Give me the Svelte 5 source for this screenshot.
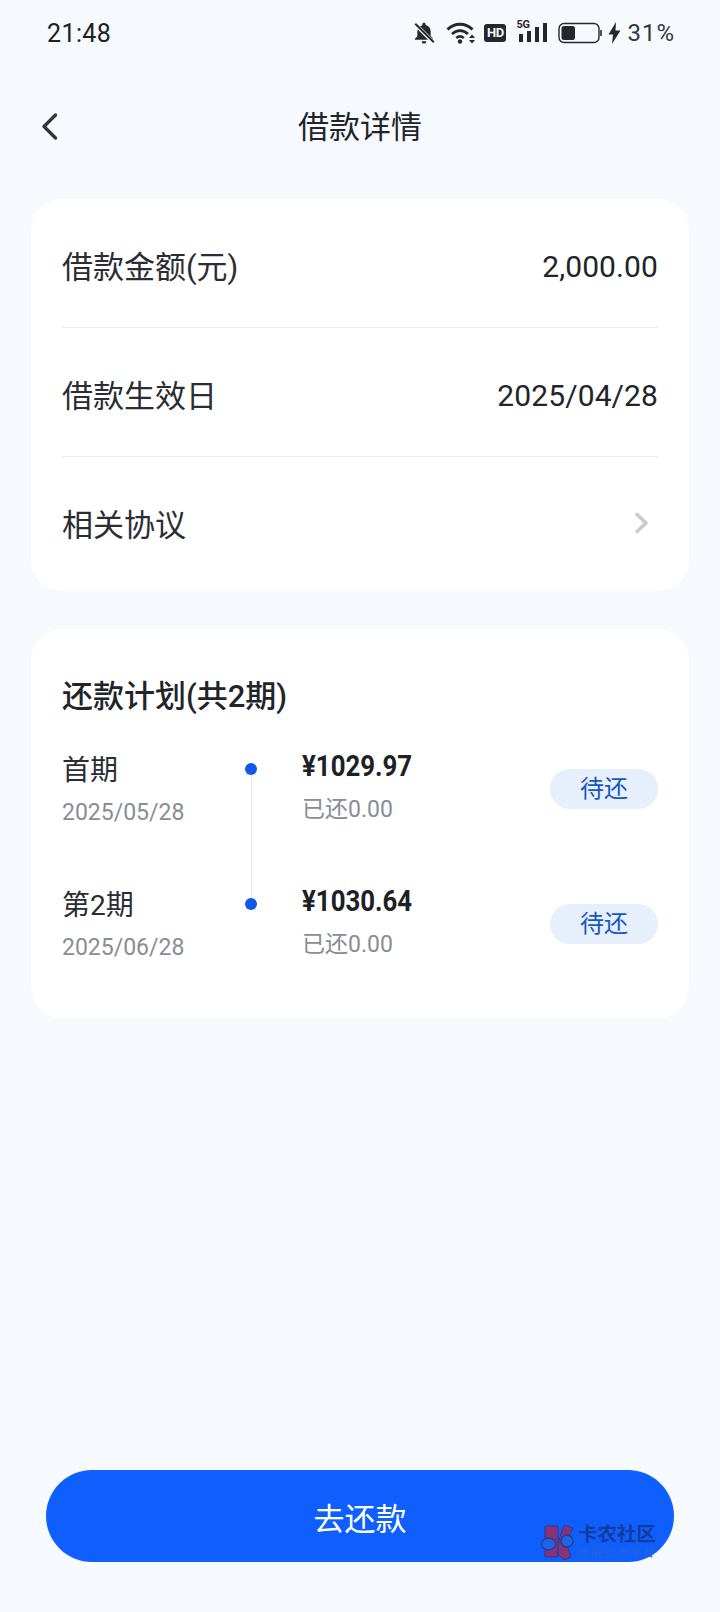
<script>
	const rows = [
		{ label: '借款金额(元)', value: '2,000.00' },
		{ label: '借款生效日', value: '2025/04/28' },
		{ label: '相关协议', arrow: true }
	];
	const plans = [
		{ title: '首期', date: '2025/05/28', amount: '¥1029.97', paid: '已还0.00', status: '待还' },
		{ title: '第2期', date: '2025/06/28', amount: '¥1030.64', paid: '已还0.00', status: '待还' }
	];
</script>

<div class="page">
	<div class="status-bar">
		<span class="time">21:48</span>
		<div class="status-icons">
			<svg class="ic-bell" width="24" height="24" viewBox="0 0 22 22">
				<path d="M11 1.500c.9 0 1.500.6 1.500 1.500v.6c3 .7 4.600 3 4.600 6v4l2.200 2.600v1H2.700v-1L4.900 14v-4c0-3 1.600-5.300 4.600-6V3c0-.9.6-1.500 1.500-1.500z" fill="#24272c" />
				<path d="M8.800 18.600h4.400a2.200 2.200 0 0 1-4.400 0z" fill="#24272c" />
				<path d="M2.500 2.500l17.500 17.500" stroke="#f6faff" stroke-width="3.600" />
				<path d="M3 2.500l17 17" stroke="#24272c" stroke-width="1.800" />
			</svg>
			<svg class="ic-wifi" width="30" height="24" viewBox="0 0 30 24">
				<path d="M1.500 8.500C8.500 1.500 19.500 1.500 26.500 8.500" fill="none" stroke="#24272c" stroke-width="2.800" />
				<path d="M6 13c4.800-4.600 11.200-4.600 16 0" fill="none" stroke="#24272c" stroke-width="2.800" />
				<path d="M10.300 17c2.500-2.200 5-2.200 7.500 0" fill="none" stroke="#24272c" stroke-width="2.600" />
				<circle cx="14" cy="20.500" r="2.200" fill="#24272c" />
				<path d="M23 17h6l-3-3.500zM23 19h6l-3 3.500z" fill="#24272c" />
			</svg>
			<span class="hd">HD</span>
			<div class="signal">
				<span class="five-g">5G</span>
				<svg width="32" height="24" viewBox="0 0 32 24">
					<rect x="3" y="13" width="4" height="8" fill="#24272c" />
					<rect x="11" y="10" width="4" height="11" fill="#24272c" />
					<rect x="19" y="6" width="4" height="15" fill="#24272c" />
					<rect x="27" y="2" width="4" height="19" fill="#24272c" />
				</svg>
			</div>
			<svg class="ic-batt" width="45" height="22" viewBox="0 0 45 22">
				<rect x="1" y="1.500" width="40" height="19" rx="5" fill="none" stroke="#24272c" stroke-width="1.400" />
				<rect x="3.500" y="4" width="13.500" height="14" rx="2.500" fill="#24272c" />
				<path d="M43 8v6" stroke="#24272c" stroke-width="1.600" />
			</svg>
			<svg class="ic-bolt" width="13" height="22" viewBox="0 0 13 22">
				<path d="M8 0L.5 12.500h4.500L4 22l8.500-13.500H7.500z" fill="#24272c" />
			</svg>
			<span class="pct">31%</span>
		</div>
	</div>

	<header class="nav">
		<svg class="back" width="20" height="30" viewBox="0 0 20 30">
			<path d="M16.500 3L5 14.500 16.500 26" fill="none" stroke="#33373d" stroke-width="3.400" stroke-linecap="round" stroke-linejoin="round" />
		</svg>
		<h1 class="title">借款详情</h1>
	</header>

	<section class="card info">
		{#each rows as row (row.label)}
			<div class="row">
				<span class="label">{row.label}</span>
				{#if row.arrow}
					<svg class="chevron" width="16" height="24" viewBox="0 0 16 24">
						<path d="M3 3.500l9 8.500-9 8.500" fill="none" stroke="#cbcbcb" stroke-width="3.600" stroke-linecap="round" stroke-linejoin="round" />
					</svg>
				{:else}
					<span class="value">{row.value}</span>
				{/if}
			</div>
		{/each}
	</section>

	<section class="card plan">
		<h2 class="plan-title">还款计划(共2期)</h2>
		<div class="plan-list">
			{#each plans as p, i (p.title)}
				<div class="plan-row">
					<div class="plan-left">
						<div class="plan-name">{p.title}</div>
						<div class="plan-date">{p.date}</div>
					</div>
					<div class="track">
						<span class="dot"></span>
						{#if i < plans.length - 1}
							<span class="line"></span>
						{/if}
					</div>
					<div class="plan-mid">
						<div class="amount">{p.amount}</div>
						<div class="paid">{p.paid}</div>
					</div>
					<span class="tag">{p.status}</span>
				</div>
			{/each}
		</div>
	</section>

	<div class="footer">
		<button class="pay">去还款</button>
		<div class="watermark">
			<svg width="34" height="36" viewBox="0 0 34 36">
				<path d="M5 2h13v31H5z" fill="#8c3178" stroke="#23408f" stroke-width="1" />
				<path d="M19 16L24 1l9 3-7 14z" fill="#8c3178" stroke="#23408f" stroke-width="1" />
				<path d="M18 18h8l5 15-7 3-6-6z" fill="#8c3178" stroke="#23408f" stroke-width="1" />
				<ellipse cx="8.500" cy="20" rx="7" ry="6" fill="#1f63e8" stroke="#23408f" stroke-width="1.500" />
				<ellipse cx="27" cy="17" rx="6" ry="6" fill="#1f63e8" stroke="#23408f" stroke-width="1.500" />
			</svg>
			<div class="wm-text">
				<span class="wm-name">卡农社区</span>
				<span class="wm-sub">金融交流平台</span>
			</div>
		</div>
	</div>
</div>

<style>
	:global(body) {
		margin: 0;
		background: #f6faff;
	}

	.page {
		width: 720px;
		height: 1612px;
		box-sizing: border-box;
		padding: 0 31px;
		display: flex;
		flex-direction: column;
		font-family: Roboto, 'Noto Sans CJK SC', sans-serif;
		color: #212429;
		background: #f6faff;
	}

	.status-bar {
		height: 66px;
		margin: 0 14px 0 16px;
		display: flex;
		align-items: center;
		justify-content: space-between;
	}

	.time {
		font-size: 25px;
		letter-spacing: 0.4px;
		color: #1d2024;
	}

	.status-icons {
		display: flex;
		align-items: center;
	}

	.ic-bell {
		margin-right: 10px;
	}

	.ic-wifi {
		margin-right: 8px;
	}

	.hd {
		width: 22px;
		height: 18px;
		border-radius: 3px;
		background: #24272c;
		color: #f6faff;
		font-size: 13px;
		font-weight: 700;
		line-height: 18px;
		text-align: center;
		margin-right: 10px;
		letter-spacing: -0.5px;
	}

	.signal {
		position: relative;
		width: 32px;
		height: 24px;
		margin-right: 10px;
	}

	.signal svg {
		display: block;
	}

	.five-g {
		position: absolute;
		left: 0;
		top: -3px;
		font-size: 11px;
		font-weight: 700;
		color: #24272c;
		letter-spacing: -0.3px;
	}

	.ic-batt {
		margin-right: 5px;
	}

	.ic-bolt {
		margin-right: 6px;
	}

	.pct {
		font-size: 24px;
		color: #33373d;
		letter-spacing: 1px;
	}

	.nav {
		height: 62px;
		margin-top: 30px;
		margin-bottom: 41px;
		position: relative;
		display: flex;
		align-items: center;
		justify-content: center;
	}

	.back {
		position: absolute;
		left: 8px;
		top: 16px;
	}

	.title {
		margin: 0;
		font-size: 31px;
		font-weight: 400;
		color: #212429;
		line-height: 1;
	}

	.card {
		background: #fff;
		border-radius: 31px;
	}

	.info {
		padding: 0 31px;
		height: 392px;
		box-sizing: border-box;
		margin-bottom: 38px;
	}

	.row {
		height: 129px;
		box-sizing: border-box;
		display: flex;
		align-items: center;
		justify-content: space-between;
		border-bottom: 1px solid #ececec;
	}

	.row:last-child {
		border-bottom: none;
	}

	.label {
		font-size: 31px;
		color: #2a2d32;
		padding-top: 2px;
	}

	.value {
		font-size: 30px;
		letter-spacing: 0.1px;
		color: #212429;
		padding-top: 6px;
	}

	.chevron {
		margin: 2px 8px 0 0;
	}

	.plan {
		height: 389px;
		box-sizing: border-box;
		padding: 48px 31px 0;
	}

	.plan-title {
		margin: 0 0 32px;
		font-size: 31px;
		line-height: 40px;
		font-weight: 500;
		color: #212429;
	}

	.plan-list {
		display: flex;
		flex-direction: column;
		gap: 48px;
	}

	.plan-row {
		height: 87px;
		display: flex;
		align-items: flex-start;
	}

	.plan-left {
		width: 183px;
		flex-shrink: 0;
		padding-top: 2px;
	}

	.plan-name {
		font-size: 28px;
		line-height: 40px;
		color: #2a2d32;
	}

	.plan-date {
		font-size: 23px;
		line-height: 32px;
		margin-top: 6px;
		color: #888d96;
	}

	.track {
		width: 12px;
		flex-shrink: 0;
		position: relative;
		margin-right: 45px;
		height: 87px;
	}

	.dot {
		position: absolute;
		left: 0;
		top: 14px;
		width: 12px;
		height: 12px;
		border-radius: 50%;
		background: #1158e8;
	}

	.line {
		position: absolute;
		left: 6px;
		top: 26px;
		width: 1px;
		height: 123px;
		background: #e4e6ea;
	}

	.plan-mid {
		flex: 1;
	}

	.amount {
		font-family: Roboto, sans-serif;
		font-size: 29px;
		line-height: 34px;
		font-weight: 700;
		color: #1d2024;
		transform: scaleX(0.89);
		transform-origin: left center;
	}

	.paid {
		font-size: 23px;
		line-height: 32px;
		margin-top: 11px;
		color: #888d96;
	}

	.tag {
		width: 108px;
		height: 40px;
		margin-top: 20px;
		border-radius: 20px;
		background: #e7effc;
		color: #1558c4;
		font-size: 24px;
		line-height: 40px;
		text-align: center;
	}

	.footer {
		position: relative;
		margin-top: auto;
		padding: 0 15px 50px;
	}

	.pay {
		display: block;
		width: 100%;
		height: 92px;
		border: none;
		border-radius: 46px;
		background: #0f5fff;
		color: #fff;
		font-family: inherit;
		font-size: 31px;
		padding: 0;
	}

	.watermark {
		position: absolute;
		left: 509px;
		top: 54px;
		display: flex;
		align-items: center;
		gap: 4px;
	}

	.wm-text {
		display: flex;
		flex-direction: column;
		line-height: 1;
	}

	.wm-name {
		font-size: 19.500px;
		font-weight: 700;
		color: #123c9c;
	}

	.wm-sub {
		font-size: 11px;
		color: #2a62d0;
		letter-spacing: 2px;
		margin-top: 3px;
	}
</style>
